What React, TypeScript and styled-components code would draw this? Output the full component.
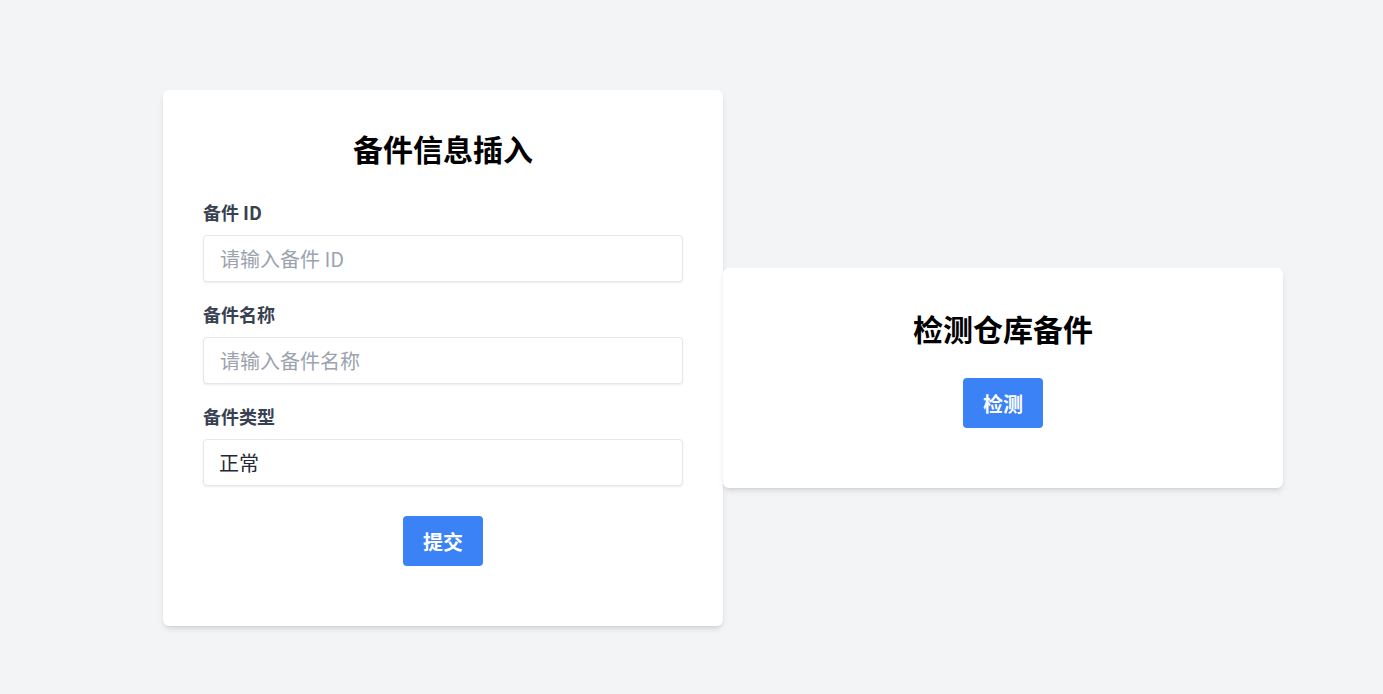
import React from "react";
import styled, { createGlobalStyle } from "styled-components";

const Global = createGlobalStyle`
  * { box-sizing: border-box; }
  html, body { margin: 0; padding: 0; background: #f3f4f6; }
  body { font-family: "Noto Sans CJK SC", "Noto Sans", sans-serif; }
`;

const Page = styled.div`
  min-height: 694px;
  padding: 22px 0 0 63px;
  display: flex;
  justify-content: center;
  align-items: center;
`;

const Card = styled.div<{ $offset?: number; $top?: number }>`
  width: 560px;
  background: #ffffff;
  border-radius: 6px;
  box-shadow: 0 4px 6px -1px rgba(0, 0, 0, 0.1), 0 2px 4px -2px rgba(0, 0, 0, 0.1);
  padding: ${(p) => p.$top ?? 40}px 40px 60px;
  margin-top: ${(p) => p.$offset ?? 0}px;
  display: flex;
  flex-direction: column;
`;

const Title = styled.h2`
  margin: 0;
  font-size: 30px;
  line-height: 36px;
  font-weight: 700;
  color: #000;
  text-align: center;
`;

const Form = styled.form`
  margin-top: 32px;
  display: flex;
  flex-direction: column;
`;

const Field = styled.div`
  display: flex;
  flex-direction: column;
  margin-bottom: 18px;
`;

const Label = styled.label`
  font-size: 18px;
  line-height: 28px;
  font-weight: 700;
  color: #374151;
  margin-bottom: 9px;
`;

const Input = styled.input`
  height: 47px;
  width: 100%;
  padding: 0 16px;
  font-family: inherit;
  font-size: 20px;
  color: #1f2937;
  border: 1px solid #e5e7eb;
  border-radius: 4px;
  box-shadow: 0 1px 2px rgba(0, 0, 0, 0.08);
  outline: none;
  &::placeholder { color: #9ca3af; }
`;

const Select = styled.select`
  height: 47px;
  width: 100%;
  padding: 0 15px;
  font-family: inherit;
  font-size: 20px;
  color: #1f2937;
  background: #fff;
  border: 1px solid #e5e7eb;
  border-radius: 4px;
  box-shadow: 0 1px 2px rgba(0, 0, 0, 0.08);
  appearance: none;
  outline: none;
`;

const Button = styled.button<{ $mt?: number }>`
  align-self: center;
  width: 80px;
  height: 50px;
  margin-top: ${(p) => p.$mt ?? 0}px;
  background: #3b82f6;
  color: #fff;
  border: none;
  border-radius: 4px;
  font-family: inherit;
  font-size: 20px;
  font-weight: 700;
  cursor: pointer;
`;

export default function App() {
  return (
    <>
      <Global />
      <Page>
        <Card>
          <Title>备件信息插入</Title>
          <Form onSubmit={(e) => e.preventDefault()}>
            <Field>
              <Label>备件 ID</Label>
              <Input placeholder="请输入备件 ID" />
            </Field>
            <Field>
              <Label>备件名称</Label>
              <Input placeholder="请输入备件名称" />
            </Field>
            <Field>
              <Label>备件类型</Label>
              <Select defaultValue="正常">
                <option value="正常">正常</option>
                <option value="损坏">损坏</option>
              </Select>
            </Field>
            <Button type="submit" $mt={12}>提交</Button>
          </Form>
        </Card>
        <Card $offset={40} $top={42}>
          <Title>检测仓库备件</Title>
          <Button $mt={32}>检测</Button>
        </Card>
      </Page>
    </>
  );
}
